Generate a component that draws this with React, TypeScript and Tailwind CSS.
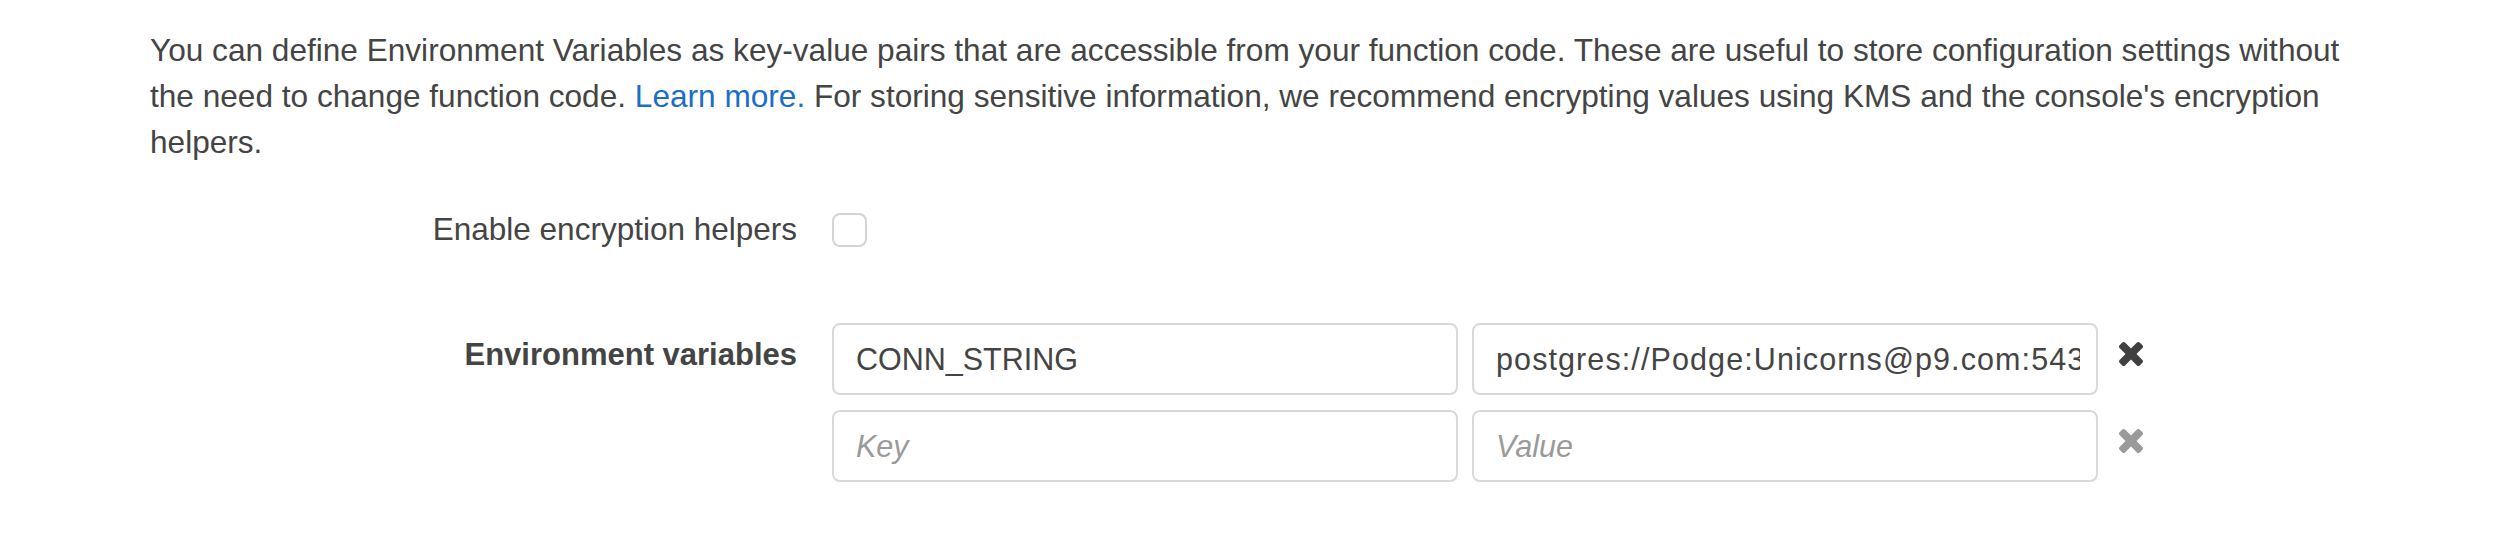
import React from "react";

const RemoveIcon = ({ muted }: { muted?: boolean }) => (
  <svg
    viewBox="302 366 1188 1188"
    className={muted ? "w-[24px] h-[24px] text-[#9a9a9a]" : "w-[24px] h-[24px] text-[#404040]"}
    fill="currentColor"
  >
    <path d="M1490 1322q0 40-28 68l-136 136q-28 28-68 28t-68-28l-294-294-294 294q-28 28-68 28t-68-28l-136-136q-28-28-28-68t28-68l294-294-294-294q-28-28-28-68t28-68l136-136q28-28 68-28t68 28l294 294 294-294q28-28 68-28t68 28l136 136q28 28 28 68t-28 68l-294 294 294 294q28 28 28 68z" />
  </svg>
);

const inputCls =
  "w-[626px] h-[72px] rounded-[8px] border-2 border-[#d9d9d9] bg-white pl-[22px] pr-[16px] text-[30.5px] text-[#444] outline-none placeholder:italic placeholder:text-[#9a9a9a] placeholder:tracking-normal";

const EnvRow = ({
  k,
  v,
  muted,
}: {
  k?: string;
  v?: string;
  muted?: boolean;
}) => (
  <div className="flex items-start gap-[14px]">
    <input className={inputCls} placeholder="Key" defaultValue={k} />
    <input className={inputCls + " tracking-[1.1px]"} placeholder="Value" defaultValue={v} />
    <div className="ml-[7px] mt-[19px]">
      <RemoveIcon muted={muted} />
    </div>
  </div>
);

export default function App() {
  return (
    <div
      className="w-full h-[553px] bg-white text-[#444]"
      style={{ fontFamily: "'Liberation Sans', Arial, sans-serif" }}
    >
      <div className="pl-[150px] pt-[27px]">
        <p className="w-[2212px] text-[31.6px] leading-[46px]">
          You can define Environment Variables as key-value pairs that are
          accessible from your function code. These are useful to store
          configuration settings without the need to change function code.{" "}
          <a className="text-[#1a6ec8]">Learn more.</a> For storing sensitive
          information, we recommend encrypting values using KMS and the
          console's encryption helpers.
        </p>
      </div>

      <div className="mt-[48px] flex items-center h-[34px]">
        <div className="w-[797px] text-right text-[31.5px]">
          Enable encryption helpers
        </div>
        <div className="ml-[35px] w-[35px] h-[34px] rounded-[8px] border-2 border-[#d4d4d4] bg-white" />
      </div>

      <div className="mt-[76px] flex items-start">
        <div className="w-[797px] mt-[12px] text-right text-[31px] leading-[40px] font-bold">
          Environment variables
        </div>
        <div className="ml-[35px] flex flex-col gap-[15px]">
          <EnvRow k="CONN_STRING" v="postgres://Podge:Unicorns@p9.com:5432/db" />
          <EnvRow muted />
        </div>
      </div>
    </div>
  );
}
